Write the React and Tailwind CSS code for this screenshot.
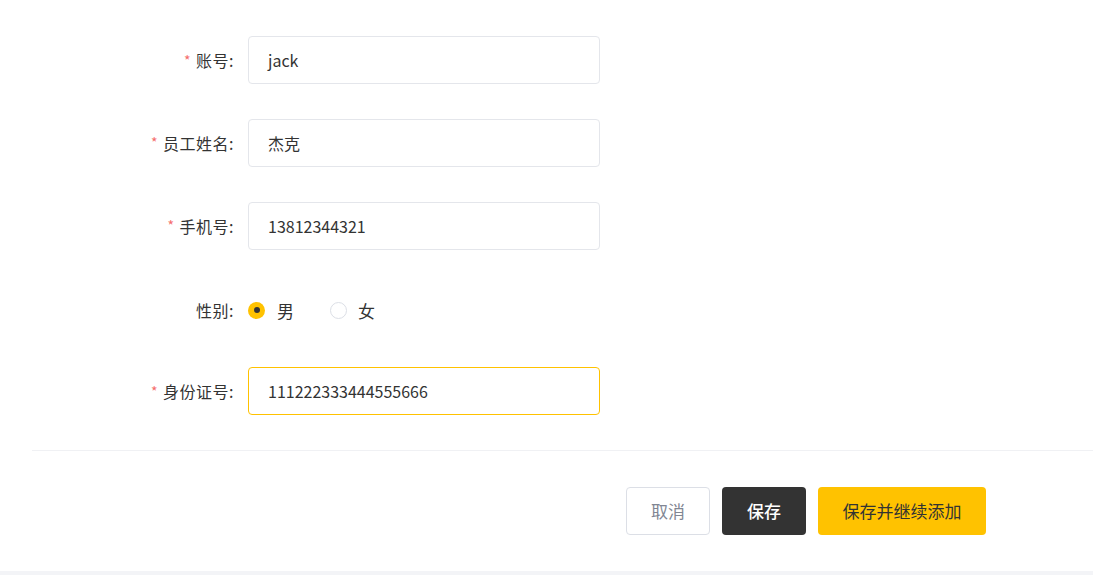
import React from "react";

const font = { fontFamily: '"Noto Sans CJK SC", "Noto Sans", sans-serif' };

function Label({ required, children }) {
  return (
    <div className="w-[234px] shrink-0 text-right text-[16px] text-[#333] tracking-[0.5px] flex items-center justify-end">
      {required && <span className="text-[#f56c6c] mr-[5px] text-[14px]">*</span>}
      <span>{children}:</span>
    </div>
  );
}

function Input({ value, focused }) {
  return (
    <div
      className={`w-[352px] h-[48px] rounded-[4px] border flex items-center pl-[19px] text-[16px] text-[#333] ${
        focused ? "border-[#ffc200]" : "border-[#e4e6eb]"
      }`}
    >
      {value}
    </div>
  );
}

function Row({ label, required, children }) {
  return (
    <div className="flex items-center h-[48px]">
      <Label required={required}>{label}</Label>
      <div className="ml-[14px]">{children}</div>
    </div>
  );
}

export default function App() {
  return (
    <div className="w-[1093px] h-[575px] bg-white flex flex-col" style={font}>
      <div className="flex flex-col gap-[34.75px] pt-[36px]">
        <Row label="账号" required>
          <Input value="jack" />
        </Row>
        <Row label="员工姓名" required>
          <Input value="杰克" />
        </Row>
        <Row label="手机号" required>
          <Input value="13812344321" />
        </Row>
        <div className="translate-y-[2px]">
          <Row label="性别">
            <div className="flex items-center text-[17px] text-[#333]">
              <span className="w-[17px] h-[17px] rounded-full bg-[#ffc200] flex items-center justify-center">
                <span className="w-[6px] h-[6px] rounded-full bg-[#333]" />
              </span>
              <span className="ml-[12px]">男</span>
              <span className="ml-[36px] w-[17px] h-[17px] rounded-full border border-[#dcdfe6] bg-white" />
              <span className="ml-[11px]">女</span>
            </div>
          </Row>
        </div>
        <Row label="身份证号" required>
          <Input value="111222333444555666" focused />
        </Row>
      </div>
      <div className="ml-[32px] mt-[35px] h-px bg-[#f0f1f4]" />
      <div className="flex pl-[626px] gap-[12px] mt-[36px]">
        <button className="w-[84px] h-[48px] rounded-[4px] border border-[#dcdfe6] bg-white text-[17px] text-[#818693]">
          取消
        </button>
        <button className="w-[84px] h-[48px] rounded-[4px] bg-[#333333] text-[17px] text-white font-medium">
          保存
        </button>
        <button className="w-[168px] h-[48px] rounded-[4px] bg-[#ffc200] text-[17px] text-[#333]">
          保存并继续添加
        </button>
      </div>
      <div className="flex-1" />
      <div className="h-[4px] bg-[#f3f4f7]" />
    </div>
  );
}
